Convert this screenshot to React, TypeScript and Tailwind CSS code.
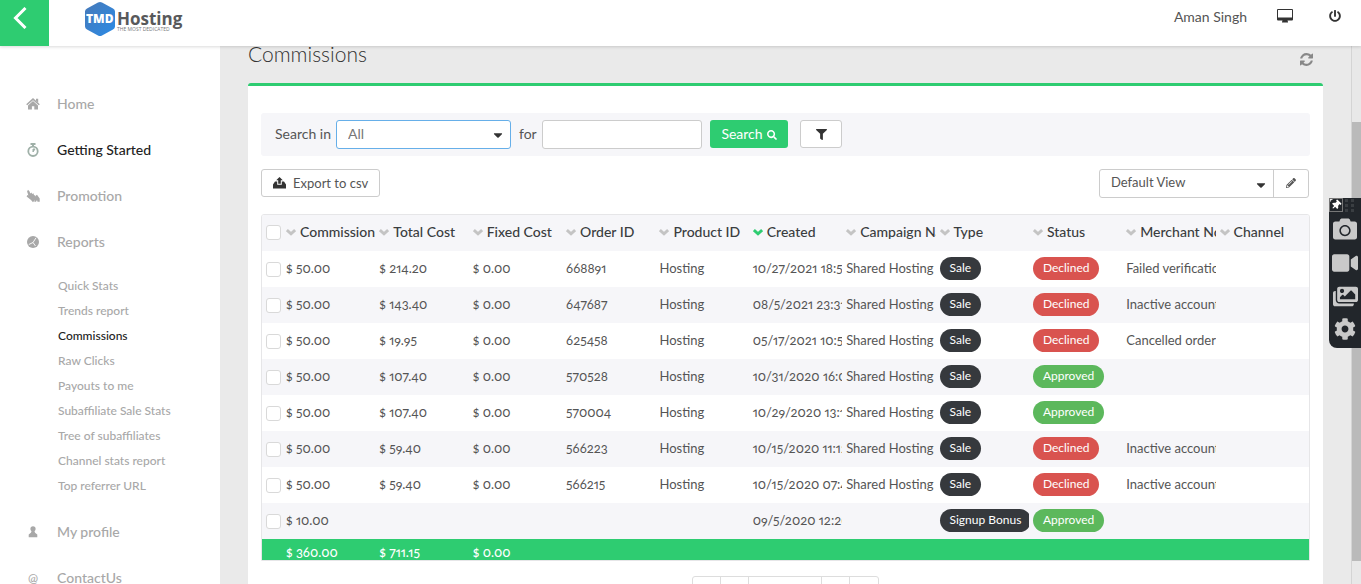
import type { ReactNode } from 'react';
import { FaCamera, FaCaretDown, FaCog, FaFilter, FaImages, FaPencilAlt, FaPowerOff, FaSearch, FaThumbtack, FaVideo } from 'react-icons/fa';

const HomeIcon = () => (
  <svg viewBox="0 0 14 12" className="h-3 w-3.5" fill="currentColor" aria-hidden="true">
    <path d="M7 0 13.800 6.200 12.800 7.300 7 2.200 1.200 7.300.2 6.200Z" />
    <path d="M10 .8h2.200v4L10 2.800Z" />
    <path d="M7 3 12 7.400V11.500H8.300V8.200H5.900v3.300H2V7.400Z" />
  </svg>
);

const StopwatchIcon = () => (
  <svg viewBox="0 0 12 14" className="h-3.5 w-3 text-[#9fb0a8]" fill="none" stroke="currentColor" aria-hidden="true">
    <circle cx="6" cy="8.300" r="4.700" strokeWidth="1.800" />
    <path d="M3.500 1h5M6 1v3" strokeWidth="2" />
    <path d="M6 9V6l2 0Z" fill="currentColor" strokeWidth="1" />
  </svg>
);

const PromotionIcon = () => (
  <svg viewBox="0 0 14 13" className="h-3.5 w-3.5" fill="currentColor" aria-hidden="true">
    <path d="M2 .3 3.600 2 4.200 4l1.200-1 .8 1.500 1.200-.7.6 1.700 1 .5v4.300L7 12.800 5 10.500.6 7l.8-1.500 1 .4L1.100 2Z" />
    <path d="M9.200 6.500 11 5.200l2.700 3.800v3.200h-2.200l-.5-1.700-1 1.700H8.300Z" />
  </svg>
);

const PieIcon = () => (
  <svg viewBox="0 0 12 12" className="h-3 w-3" aria-hidden="true">
    <circle cx="6" cy="6" r="6" fill="currentColor" />
    <path d="M6 6.500 9 1.800M6 6.500 1.800 8.500M6 6.500l2.500 3.500" stroke="#fff" strokeWidth="0.900" />
  </svg>
);

const PawnIcon = () => (
  <svg viewBox="0 0 10 12" className="h-3 w-2.5" fill="currentColor" aria-hidden="true">
    <circle cx="5" cy="2.800" r="2.600" />
    <path d="M3.600 4.500h2.800c.2 1.800.8 2.700 2.900 4v2.800H.7V8.500c2.100-1.300 2.700-2.200 2.900-4Z" />
  </svg>
);

const RefreshIcon = () => (
  <svg viewBox="0 0 1536 1536" className="size-[13px]" fill="currentColor" aria-hidden="true">
    <path d="M1511 928q0 5-1 7-64 268-268 434.500T764 1536q-146 0-282.500-55T238 1324l-129 129q-19 19-45 19t-45-19-19-45V960q0-26 19-45t45-19h448q26 0 45 19t19 45-19 45l-137 137q71 66 161 102t187 36q134 0 250-65t186-179q11-17 53-117 8-23 30-23h192q13 0 22.500 9.500t9.500 22.500zm25-800v448q0 26-19 45t-45 19h-448q-26 0-45-19t-19-45 19-45l138-138Q969 256 768 256q-134 0-250 65T332 500q-11 17-53 117-8 23-30 23H50q-13 0-22.500-9.500T18 608v-7q65-268 270-434.500T768 0q146 0 284 55.500T1297 212l130-129q19-19 45-19t45 19 19 45z" />
  </svg>
);

const DesktopIcon = () => (
  <svg viewBox="0 0 16 14" className="h-3.5 w-4" fill="currentColor" aria-hidden="true">
    <path fillRule="evenodd" d="M1 0h14a1 1 0 0 1 1 1v9.500a1 1 0 0 1-1 1h-4.500l.5 1.500v.5H5V13l.5-1.500H1a1 1 0 0 1-1-1V1a1 1 0 0 1 1-1Zm0 1v7.500h14V1Z" />
  </svg>
);

const ExportIcon = () => (
  <svg viewBox="0 0 13 12" className="h-3 w-[13px] text-[#333]" fill="currentColor" aria-hidden="true">
    <path d="M6.500 0 9.800 3.300H7.800v3.500H5.200V3.300H3.200Z" />
    <path d="M2 4.500h2.200v3.300h4.600V4.500H11L13 7.500v4H0v-4Z" />
  </svg>
);

const SortIcon = ({ active }: { active?: boolean }) => (
  <svg viewBox="0 0 10 8" className={active ? 'h-2 w-2.5 shrink-0 text-[#2ecc71]' : 'h-2 w-2.5 shrink-0 text-[#c4c4c4]'} fill="none" aria-hidden="true">
    <path d="M.9 2 5 5.800 9.100 2" stroke="currentColor" strokeWidth="2.900" />
  </svg>
);

const Logo = () => (
  <svg viewBox="0 0 100 36" className="h-9 w-[100px]" role="img" aria-label="TMDHosting">
    <defs>
      <linearGradient id="hex" x1="0" x2="1" y1="0" y2="1">
        <stop offset="0" stopColor="#4779b8" />
        <stop offset="1" stopColor="#2b8be6" />
      </linearGradient>
    </defs>
    <path d="M14 2.500q2-1 4 0l11 6q2 1 2 3v15q0 2-2 3l-11 6q-2 1-4 0l-11-6q-2-1-2-3v-15q0-2 2-3Z" fill="url(#hex)" />
    <text x="2" y="23" fontFamily="Open Sans" fontWeight="800" fontSize="12" fill="#fff">TMD</text>
    <text x="33" y="25" fontFamily="Open Sans" fontWeight="700" fontSize="17" fill="#58595b">Hosting</text>
    <text x="33" y="31" fontFamily="Open Sans" fontSize="5" fill="#77787b">THE MOST DEDICATED</text>
  </svg>
);

const reportLinks = [
  'Quick Stats',
  'Trends report',
  'Commissions',
  'Raw Clicks',
  'Payouts to me',
  'Subaffiliate Sale Stats',
  'Tree of subaffiliates',
  'Channel stats report',
  'Top referrer URL',
];

const columns = [
  'Commission',
  'Total Cost',
  'Fixed Cost',
  'Order ID',
  'Product ID',
  'Created',
  'Campaign Name',
  'Type',
  'Status',
  'Merchant Note',
  'Channel',
];

interface Row {
  commission: string;
  total?: string;
  fixed?: string;
  order?: string;
  product?: string;
  created: string;
  campaign?: string;
  type: string;
  approved?: boolean;
  note?: string;
}

const sale = { commission: '$ 50.00', fixed: '$ 0.00', product: 'Hosting', campaign: 'Shared Hosting', type: 'Sale' };

const rows: Row[] = [
  { ...sale, total: '$ 214.20', order: '668891', created: '10/27/2021 18:55', note: 'Failed verification' },
  { ...sale, total: '$ 143.40', order: '647687', created: '08/5/2021 23:31', note: 'Inactive account' },
  { ...sale, total: '$ 19.95', order: '625458', created: '05/17/2021 10:52', note: 'Cancelled order' },
  { ...sale, total: '$ 107.40', order: '570528', created: '10/31/2020 16:02', approved: true },
  { ...sale, total: '$ 107.40', order: '570004', created: '10/29/2020 13:14', approved: true },
  { ...sale, total: '$ 59.40', order: '566223', created: '10/15/2020 11:12', note: 'Inactive account' },
  { ...sale, total: '$ 59.40', order: '566215', created: '10/15/2020 07:41', note: 'Inactive account' },
  { commission: '$ 10.00', created: '09/5/2020 12:20', type: 'Signup Bonus', approved: true },
];

const NavItem = ({ icon, label, active }: { icon: ReactNode; label: string; active?: boolean }) => (
  <a href="#" className="flex h-[46px] items-center text-sm font-medium text-[#a8a8a8]">
    <span className="flex w-[57px] justify-center pl-2.5 pr-px">{icon}</span>
    <span className={active ? 'text-[#222]' : ''}>{label}</span>
  </a>
);

const Sidebar = () => (
  <nav className="w-[220px] shrink-0 overflow-hidden bg-white pt-[35px]">
    <NavItem icon={<HomeIcon />} label="Home" />
    <NavItem icon={<StopwatchIcon />} label="Getting Started" active />
    <NavItem icon={<PromotionIcon />} label="Promotion" />
    <NavItem icon={<PieIcon />} label="Reports" />
    <ul className="pt-2 pb-[11px]">
      {reportLinks.map((label) => (
        <li key={label}>
          <a
            href="#"
            className={`flex h-[25px] items-center pl-[58px] text-xs font-medium ${label === 'Commissions' ? 'text-[#222]' : 'text-[#a8a8a8]'}`}
          >
            {label}
          </a>
        </li>
      ))}
    </ul>
    <NavItem icon={<PawnIcon />} label="My profile" />
    <NavItem icon={<span className="text-xs">@</span>} label="ContactUs" />
  </nav>
);

const Checkbox = ({ label }: { label: string }) => (
  <input
    type="checkbox"
    aria-label={label}
    className="block size-[15px] appearance-none rounded-[3px] border border-[#d9d9d9] bg-white"
  />
);

const Cell = ({ children }: { children?: ReactNode }) => (
  <td className="overflow-hidden p-0 pb-0.5 pl-1 whitespace-nowrap">{children}</td>
);

const badge = 'inline-flex h-[23px] items-center rounded-full px-2.5 align-middle text-xs text-white';

const CommissionTable = () => (
  <div className="mt-4 overflow-hidden rounded-t-[3px] border border-[#e6e6e8]">
    <table className="w-full table-fixed border-collapse text-[13px] text-[#555] oldstyle-nums proportional-nums">
      <thead>
        <tr className="h-9 bg-[#f6f6f9] text-sm">
          <th className="w-5 p-0 pb-0.5 pl-1">
            <Checkbox label="Select all" />
          </th>
          {columns.map((name) => (
            <th key={name} className="overflow-hidden p-0 pb-[3px] pl-1 text-left font-medium whitespace-nowrap text-[#3a3d40]">
              <button type="button" className="flex items-center gap-1">
                <SortIcon active={name === 'Created'} />
                {name}
              </button>
            </th>
          ))}
        </tr>
      </thead>
      <tbody>
        {rows.map((row, i) => (
          <tr key={i} className="h-9 even:bg-[#f6f6f9]">
            <td className="p-0 pl-1">
              <Checkbox label={`Select row ${i + 1}`} />
            </td>
            <Cell>{row.commission}</Cell>
            <Cell>{row.total}</Cell>
            <Cell>{row.fixed}</Cell>
            <Cell>{row.order}</Cell>
            <Cell>{row.product}</Cell>
            <Cell>{row.created}</Cell>
            <Cell>{row.campaign}</Cell>
            <Cell>
              <span className={`${badge} bg-[#36393d]`}>{row.type}</span>
            </Cell>
            <Cell>
              <span className={`${badge} ${row.approved ? 'bg-[#5cb85c]' : 'bg-[#d9534f]'}`}>
                {row.approved ? 'Approved' : 'Declined'}
              </span>
            </Cell>
            <Cell>{row.note}</Cell>
            <Cell />
          </tr>
        ))}
      </tbody>
      <tfoot>
        <tr className="h-[21px] bg-[#2ecc71] leading-4 font-medium text-white">
          <td />
          <td className="p-0 pt-1 pl-1">$ 360.00</td>
          <td className="p-0 pt-1 pl-1">$ 711.15</td>
          <td className="p-0 pt-1 pl-1">$ 0.00</td>
          <td colSpan={8} />
        </tr>
      </tfoot>
    </table>
  </div>
);

const SearchBar = () => (
  <form className="flex h-[43px] items-center rounded-[3px] bg-[#f6f6f9] pl-3.5">
    <label htmlFor="field" className="w-[61px] pb-0.5">
      Search in
    </label>
    <div className="relative">
      <select id="field" className="block h-[29px] w-[175px] appearance-none rounded-[3px] border border-[#66afe9] bg-white pb-0.5 pl-[11px] text-[#777]">
        <option>All</option>
      </select>
      <FaCaretDown className="pointer-events-none absolute top-2 right-1.5 size-3.5 text-[#333]" />
    </div>
    <label htmlFor="query" className="w-[31px] pb-0.5 pl-2">
      for
    </label>
    <input id="query" type="text" className="h-[29px] w-40 rounded-[3px] border border-[#ccc] bg-white px-2" />
    <button type="button" className="mb-px ml-2 flex h-7 w-[78px] items-center justify-center gap-1 rounded-[3px] bg-[#2ecc71] text-white">
      Search
      <FaSearch className="mt-0.5 size-2.5" />
    </button>
    <button type="button" aria-label="Filter" className="mb-px ml-3 flex h-7 w-[42px] items-center justify-center rounded-[3px] border border-[#ccc] bg-white text-[#333]">
      <FaFilter className="size-[11px]" />
    </button>
  </form>
);

const Pagination = () => (
  <div className="mx-auto mt-[15px] flex h-7 w-[187px] divide-x divide-[#ddd] rounded-[3px] border border-[#ddd]">
    <button type="button" aria-label="First page" className="w-7" />
    <button type="button" aria-label="Previous page" className="w-7" />
    <span className="flex-1" />
    <button type="button" aria-label="Next page" className="w-7" />
    <button type="button" aria-label="Last page" className="w-7" />
  </div>
);

const CaptureToolbar = () => (
  <div className="fixed top-[198px] right-0 z-20 flex h-[150px] w-8 flex-col items-center justify-between rounded-l-lg bg-[#22262b] pt-[19px] pb-2 text-[#c9c9c9]">
    <button type="button" aria-label="Pin" className="absolute top-0 left-0 flex size-3.5 items-center justify-center border border-[#777] text-white">
      <FaThumbtack className="size-2.5 rotate-45" />
    </button>
    <svg viewBox="0 0 9 14" className="absolute top-0 left-4 h-3.5 w-[9px]" fill="#3a3e42" aria-hidden="true">
      <path d="M0 1h3v3H0ZM6 1h3v3H6ZM0 6h3v3H0ZM6 6h3v3H6ZM0 11h3v3H0ZM6 11h3v3H6Z" />
    </svg>
    <button type="button" aria-label="Screenshot"><FaCamera className="size-6" /></button>
    <button type="button" aria-label="Record"><FaVideo className="size-[26px]" /></button>
    <button type="button" aria-label="Gallery"><FaImages className="size-[25px]" /></button>
    <button type="button" aria-label="Settings"><FaCog className="size-[22px]" /></button>
  </div>
);

export default function App() {
  return (
    <div className="flex h-screen flex-col overflow-hidden bg-[#eaeaea] font-[Lato,sans-serif] text-sm text-[#555]">
      <header className="relative z-10 flex h-[46px] shrink-0 bg-white shadow-[0_1px_3px_rgba(0,0,0,0.15)]">
        <button type="button" aria-label="Back" className="flex w-[49px] justify-center bg-[#2ecc71] pt-[7px] pr-2.5">
          <svg viewBox="0 0 14 22" className="h-[22px] w-3.5" fill="none" stroke="#fff" strokeWidth="3">
            <path d="M12.500 1 2.500 11 12.500 21" />
          </svg>
        </button>
        <a href="#" className="ml-[35px]">
          <Logo />
        </a>
        <div className="ml-auto flex items-start pr-5">
          <span className="mr-[30px] pt-[7px]">Aman Singh</span>
          <button type="button" aria-label="Desktop" className="mr-9 pt-[9px] text-[#333]">
            <DesktopIcon />
          </button>
          <button type="button" aria-label="Log out" className="pt-2.5 text-[#333]">
            <FaPowerOff className="size-3" />
          </button>
        </div>
      </header>

      <div className="flex min-h-0 flex-1">
        <Sidebar />
        <main className="flex min-w-0 flex-1 flex-col px-7">
          <div className="flex h-[37px] shrink-0 items-start justify-between pr-2.5">
            <h1 className="text-[21px] leading-4 font-light text-[#333]">Commissions</h1>
            <button type="button" aria-label="Refresh" className="mt-[7px] text-[#888]">
              <RefreshIcon />
            </button>
          </div>
          <section className="flex-1 rounded-t-[3px] border-t-3 border-[#2ecc71] bg-white px-[13px] pt-[27px]">
            <SearchBar />
            <div className="mt-[13px] flex items-start justify-between pr-px text-[13px]">
              <button type="button" className="flex h-7 items-center gap-[7px] rounded-[3px] border border-[#ccc] px-[11px]">
                <ExportIcon />
                Export to csv
              </button>
              <div className="flex h-[29px] rounded-[3px] border border-[#ccc]">
                <div className="relative">
                  <select aria-label="View" className="block h-full w-[174px] appearance-none border-r border-[#ccc] pb-0.5 pl-[11px]">
                    <option>Default View</option>
                  </select>
                  <FaCaretDown className="pointer-events-none absolute top-2 right-1.5 size-3.5 text-[#333]" />
                </div>
                <button type="button" aria-label="Edit view" className="flex w-[34px] items-center justify-center pb-0.5">
                  <FaPencilAlt className="size-2.5" />
                </button>
              </div>
            </div>
            <CommissionTable />
            <Pagination />
          </section>
        </main>
        <div className="flex w-2.5 shrink-0 flex-col border-l border-[#d4d4d4] bg-[#e8e8e8] pt-[76px] pb-[23px]">
          <div className="flex-1 bg-[#bababa]" />
        </div>
      </div>
      <CaptureToolbar />
    </div>
  );
}
